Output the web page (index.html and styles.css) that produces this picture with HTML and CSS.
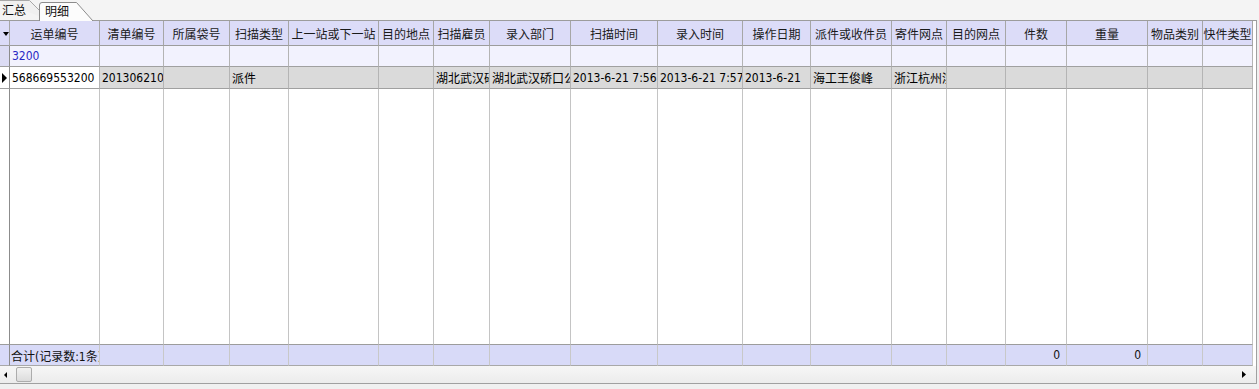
FILE: index.html
```html
<!DOCTYPE html>
<html lang="zh-CN">
<head>
<meta charset="utf-8">
<title>明细</title>
<link rel="stylesheet" href="styles.css">
</head>
<body>
<div class="tabs">
  <div class="tab tab-inactive">
    <svg class="tab-shape" width="50" height="20" viewBox="0 0 50 20"><path d="M-1 0.5 H29.5 L49 20" fill="#f0f0f0" stroke="#a8a8a8"/></svg>
    <span class="tab-label">汇总</span>
  </div>
  <div class="tab tab-active">
    <svg class="tab-shape" width="54" height="21" viewBox="0 0 54 21"><path d="M0.5 21 V5 Q0.5 2.5 3 2.5 H37.5 L54 21" fill="#fcfcfc" stroke="#8c8c8c"/></svg>
    <span class="tab-label">明细</span>
  </div>
</div>

<div class="gridbox">
  <div class="grid">
    <div class="row row-head">
      <div class="cell ind"><svg width="6" height="4" viewBox="0 0 6 4"><path d="M0 0 H6 L3 4 Z" fill="#000"/></svg></div>
      <div class="cell">运单编号</div>
      <div class="cell">清单编号</div>
      <div class="cell">所属袋号</div>
      <div class="cell">扫描类型</div>
      <div class="cell">上一站或下一站</div>
      <div class="cell">目的地点</div>
      <div class="cell">扫描雇员</div>
      <div class="cell">录入部门</div>
      <div class="cell">扫描时间</div>
      <div class="cell">录入时间</div>
      <div class="cell">操作日期</div>
      <div class="cell">派件或收件员</div>
      <div class="cell">寄件网点</div>
      <div class="cell">目的网点</div>
      <div class="cell">件数</div>
      <div class="cell">重量</div>
      <div class="cell">物品类别</div>
      <div class="cell">快件类型</div>
    </div>

    <div class="row row-filter">
      <div class="cell ind"></div>
      <div class="cell filter-text">3200</div>
      <div class="cell"></div><div class="cell"></div><div class="cell"></div><div class="cell"></div>
      <div class="cell"></div><div class="cell"></div><div class="cell"></div><div class="cell"></div>
      <div class="cell"></div><div class="cell"></div><div class="cell"></div><div class="cell"></div>
      <div class="cell"></div><div class="cell"></div><div class="cell"></div><div class="cell"></div>
      <div class="cell"></div>
    </div>

    <div class="row row-data">
      <div class="cell ind"><svg width="6" height="10" viewBox="0 0 6 10"><path d="M0 0 L5 5 L0 10 Z" fill="#000"/></svg></div>
      <div class="cell focus">568669553200</div>
      <div class="cell">201306210001</div>
      <div class="cell"></div>
      <div class="cell">派件</div>
      <div class="cell"></div>
      <div class="cell"></div>
      <div class="cell">湖北武汉硚口公司</div>
      <div class="cell">湖北武汉硚口公司</div>
      <div class="cell">2013-6-21 7:56:12</div>
      <div class="cell">2013-6-21 7:57:03</div>
      <div class="cell">2013-6-21</div>
      <div class="cell">海工王俊峰</div>
      <div class="cell">浙江杭州滨江</div>
      <div class="cell"></div><div class="cell"></div><div class="cell"></div><div class="cell"></div><div class="cell"></div>
    </div>

    <div class="row row-fill">
      <div class="cell ind"></div>
      <div class="cell"></div><div class="cell"></div><div class="cell"></div><div class="cell"></div><div class="cell"></div>
      <div class="cell"></div><div class="cell"></div><div class="cell"></div><div class="cell"></div><div class="cell"></div>
      <div class="cell"></div><div class="cell"></div><div class="cell"></div><div class="cell"></div><div class="cell"></div>
      <div class="cell"></div><div class="cell"></div><div class="cell"></div>
    </div>

    <div class="row row-foot">
      <div class="cell ind"></div>
      <div class="cell">合计(记录数:1条)</div>
      <div class="cell"></div><div class="cell"></div><div class="cell"></div><div class="cell"></div>
      <div class="cell"></div><div class="cell"></div><div class="cell"></div><div class="cell"></div>
      <div class="cell"></div><div class="cell"></div><div class="cell"></div><div class="cell"></div>
      <div class="cell"></div>
      <div class="cell num">0</div>
      <div class="cell num">0</div>
      <div class="cell"></div><div class="cell"></div>
    </div>
  </div>

  <div class="hscroll">
    <svg class="arrow" width="4" height="6" viewBox="0 0 4 6"><path d="M3 0 V6 L0 3 Z" fill="#000"/></svg>
    <div class="thumb"></div>
    <div class="track"></div>
    <svg class="arrow" width="4" height="7" viewBox="0 0 4 7"><path d="M0 0 V7 L4 3.5 Z" fill="#000"/></svg>
  </div>
</div>
</body>
</html>
```

FILE: styles.css
```css
html, body {
  margin: 0;
  padding: 0;
}
body {
  width: 1259px;
  height: 389px;
  overflow: hidden;
  background: #f0f0f0;
  font-family: "DejaVu Sans Condensed", "Liberation Sans", "Noto Sans CJK SC", sans-serif;
  font-size: 12px;
  color: #111;
}

/* tabs */
.tabs {
  display: flex;
  height: 20px;
  background: #f4f4f4;
}
.tab {
  position: relative;
  height: 20px;
  box-sizing: border-box;
}
.tab-shape {
  position: absolute;
  left: 0;
  top: 0;
}
.tab-label {
  position: relative;
  display: block;
  line-height: 20px;
  padding-top: 1px;
}
.tab-inactive {
  width: 50px;
  padding-left: 2px;
}
.tab-active {
  width: 54px;
  margin-left: -11px;
  padding-left: 6px;
  z-index: 1;
}
.tab-active .tab-label {
  padding-top: 2px;
}

/* grid box */
.gridbox {
  width: 1257px;
  box-sizing: border-box;
  border-top: 1px solid #9c9c9c;
  border-right: 1px solid #a0a0a0;
  border-bottom: 1px solid #a0a0a0;
  background: #ffffff;
}
.grid {
  display: grid;
  width: 1253px;
  grid-template-columns: 10px 90px 64px 66px 59px 90px 55px 56px 81px 87px 85px 68px 81px 55px 59px 61px 81px 55px 50px;
  grid-template-rows: 25px 21px 22px 256px 21px;
}
.row {
  display: contents;
}
.cell {
  box-sizing: border-box;
  border-right: 1px solid #b4b4b4;
  border-bottom: 1px solid #a0a0a0;
  display: flex;
  align-items: center;
  white-space: nowrap;
  overflow: hidden;
  padding: 0 1px 0 2px;
}
.cell.ind {
  border-right-color: #8c8c8c;
  padding: 0 0 0 2px;
}

.row-head .cell {
  background: #dcdcf8;
  justify-content: center;
  padding: 0;
  border-right-color: #a6a6a6;
  border-bottom-color: #9c9c9c;
  color: #1a1a1a;
}
.row-head .cell.ind {
  justify-content: flex-start;
  padding-left: 3px;
  padding-top: 1px;
}

.row-filter .cell {
  background: #f2f2fe;
}
.row-filter .cell.ind {
  background: #dcdcf4;
}
.filter-text {
  color: #2a28c4;
}

.row-data .cell {
  background: #dadada;
  color: #000;
}
.row-data .cell.ind,
.row-data .cell.focus {
  background: #ffffff;
}
.row-data .cell.ind {
  padding-left: 2px;
}

.row-fill .cell {
  background: #ffffff;
  border-right-color: #c4c4c4;
  border-bottom-color: #9c9c9c;
}
.row-fill .cell.ind {
  border-right-color: #8c8c8c;
}

.row-foot .cell {
  background: #d8daf8;
  border-bottom-color: #a8a8a8;
  border-right-color: #c8c8c8;
  padding-left: 1px;
}
.row-foot .cell.ind {
  border-right-color: #8c8c8c;
}
.row-foot .cell.num {
  justify-content: flex-end;
  padding-right: 6px;
}

/* horizontal scrollbar */
.hscroll {
  display: flex;
  align-items: center;
  height: 17px;
  background: linear-gradient(#f6f6f6, #ececec);
  padding: 0 10px 0 4px;
}
.arrow {
  flex: none;
}
.thumb {
  flex: none;
  width: 16px;
  height: 15px;
  box-sizing: border-box;
  margin-left: 8px;
  border: 1px solid #acacac;
  border-radius: 2px;
  background: linear-gradient(#f2f2f2, #dcdcdc);
}
.track {
  flex: 1;
}
```
